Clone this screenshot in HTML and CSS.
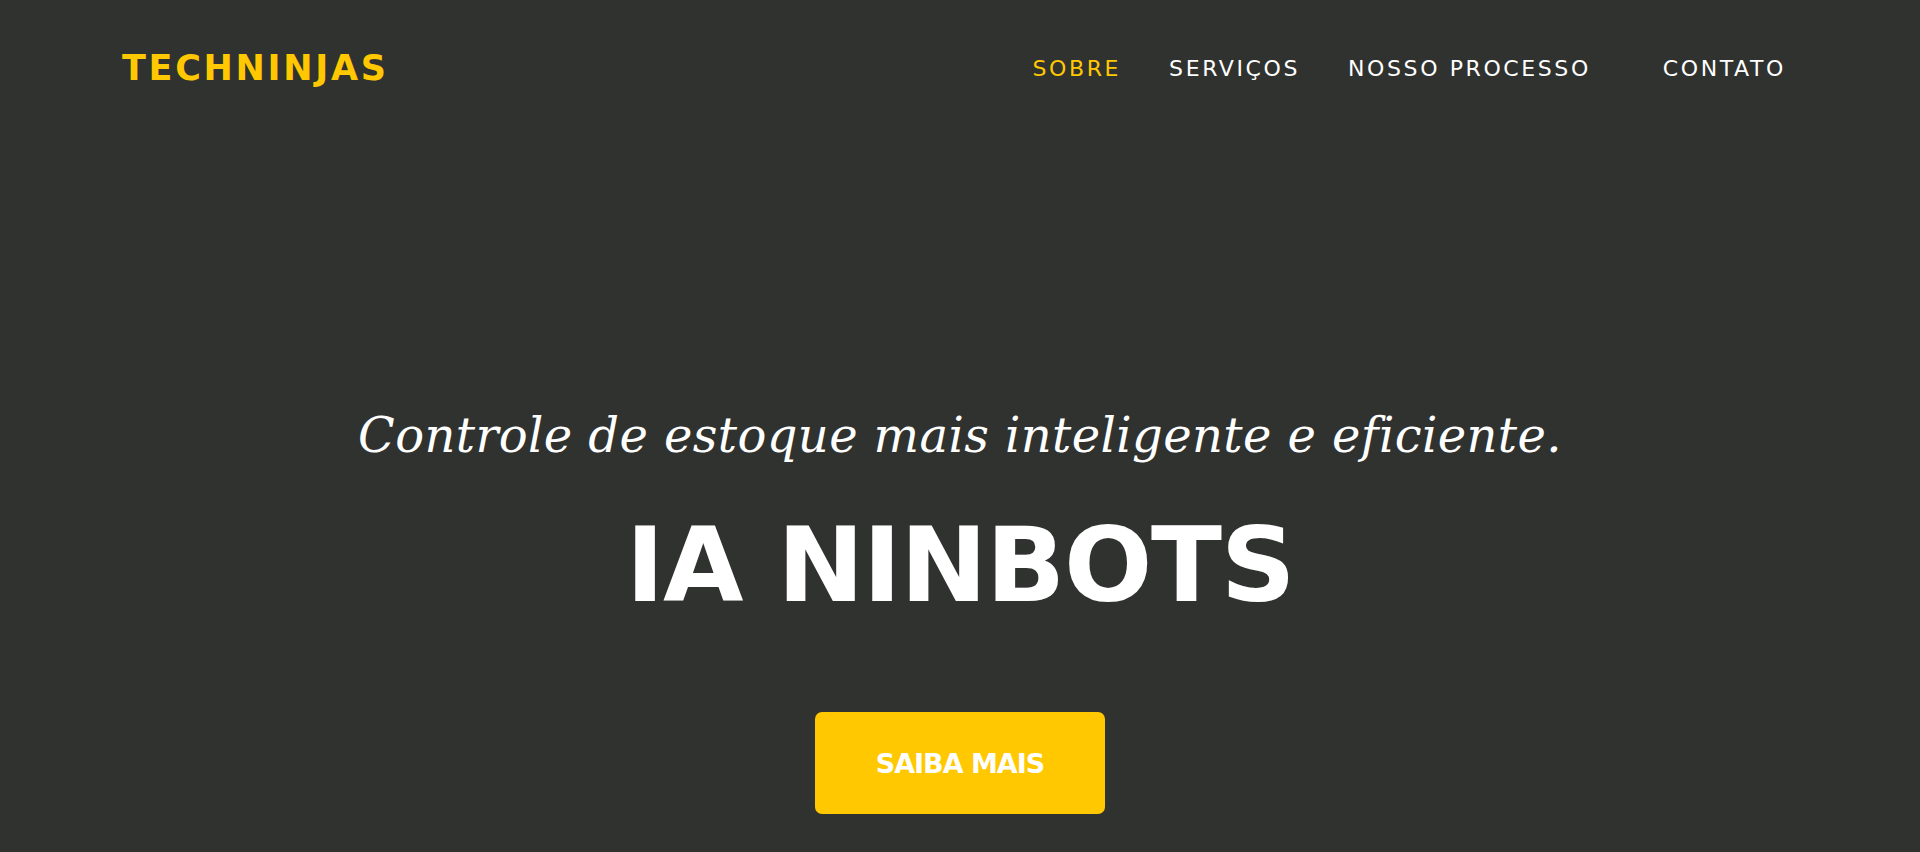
FILE: index.html
```html
<!DOCTYPE html>
<html lang="pt-BR">
<head>
<meta charset="utf-8">
<title>TechNinjas</title>
<link rel="stylesheet" href="styles.css">
</head>
<body>
<header class="topbar">
  <a class="brand" href="#">TECHNINJAS</a>
  <nav class="menu">
    <a class="menu-link active" href="#">SOBRE</a>
    <a class="menu-link" href="#">SERVIÇOS</a>
    <a class="menu-link" href="#">NOSSO PROCESSO</a>
    <a class="menu-link last" href="#">CONTATO</a>
  </nav>
</header>
<main class="hero">
  <p class="hero-sub">Controle de estoque mais inteligente e eficiente.</p>
  <h1 class="hero-title">IA NINBOTS</h1>
  <a class="hero-btn" href="#">SAIBA MAIS</a>
</main>
</body>
</html>
```
FILE: styles.css
```css
html, body {
  margin: 0;
  padding: 0;
  background: #30322f;
  height: 852px;
  overflow: hidden;
}

body {
  font-family: "DejaVu Sans", sans-serif;
  color: #ffffff;
}

a {
  text-decoration: none;
}

.topbar {
  height: 136px;
  padding: 0 122px;
  display: flex;
  align-items: center;
  justify-content: space-between;
}

.brand {
  font-family: "DejaVu Sans", sans-serif;
  font-weight: 700;
  font-size: 35px;
  letter-spacing: 2.7px;
  color: #ffc800;
}

.menu {
  display: flex;
  align-items: center;
  gap: 24px;
}

.menu-link {
  font-family: "DejaVu Sans", sans-serif;
  font-weight: 400;
  font-size: 22px;
  letter-spacing: 2.6px;
  color: #ffffff;
  padding: 0 12px;
}

.menu-link.active {
  color: #ffc800;
}

.menu-link.last {
  margin-left: 24px;
}

.hero {
  display: flex;
  flex-direction: column;
  align-items: center;
  text-align: center;
  padding-top: 275px;
}

.hero-sub {
  margin: 0;
  font-family: "DejaVu Serif", serif;
  font-style: italic;
  font-weight: 400;
  font-size: 48px;
  line-height: 48px;
  letter-spacing: 0.4px;
  color: #ffffff;
}

.hero-title {
  margin: 54px 0 0;
  font-family: "DejaVu Sans", sans-serif;
  font-weight: 700;
  font-size: 104px;
  line-height: 104px;
  letter-spacing: -1.3px;
  color: #ffffff;
}

.hero-btn {
  margin-top: 95px;
  width: 290px;
  height: 102px;
  display: flex;
  align-items: center;
  justify-content: center;
  background: #ffc800;
  border-radius: 7px;
  font-family: "DejaVu Sans", sans-serif;
  font-weight: 700;
  font-size: 27px;
  letter-spacing: -1px;
  color: #ffffff;
}
```
